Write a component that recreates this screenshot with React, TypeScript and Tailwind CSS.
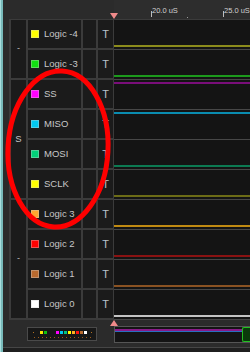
type Channel = { name: string; swatch: string; line: string; high?: boolean };

const channels: Channel[] = [
  { name: 'Logic -4', swatch: '#ffff00', line: '#8c8c1c' },
  { name: 'Logic -3', swatch: '#11e011', line: '#1c9a1c' },
  { name: 'SS', swatch: '#ff00ff', line: '#7a0e7a', high: true },
  { name: 'MISO', swatch: '#00c8f0', line: '#0a8cb0', high: true },
  { name: 'MOSI', swatch: '#00d27a', line: '#0c7a52' },
  { name: 'SCLK', swatch: '#ffff00', line: '#6c6c16' },
  { name: 'Logic 3', swatch: '#ffa530', line: '#c08a12' },
  { name: 'Logic 2', swatch: '#ff0000', line: '#8a1212' },
  { name: 'Logic 1', swatch: '#b8692e', line: '#8a5222' },
  { name: 'Logic 0', swatch: '#ffffff', line: '#c4c4c4' },
];

// small colour strip in the bottom-left mini overview
const legend = ['#ffe600', '#11c011', '', '', '#ff00ff', '#00c8f0', '#00c080', '#ffff00', '#ffb020', '#ff1010', '#b8692e', '#ffffff'];

function DownMarker() {
  return <div className="h-0 w-0 border-x-[4px] border-t-[6px] border-x-transparent border-t-[#f08a8a]" />;
}

function UpMarker() {
  return <div className="h-0 w-0 border-x-[4px] border-b-[6px] border-x-transparent border-b-[#f08a8a]" />;
}

export default function App() {
  return (
    <div className="relative flex h-[352px] w-[250px] overflow-hidden bg-[#2b2b2b] font-['Liberation_Sans',Arial,sans-serif]">
      {/* window edge */}
      <div className="w-px bg-[#a8dede]" />
      <div className="w-[2px] bg-[#78baba]" />

      <div className="flex flex-1 flex-col">
        {/* time axis header */}
        <div className="relative h-[19px] shrink-0">
          <div className="absolute right-0 top-0 h-[19px] w-[136px] bg-[#2d2d2d]">
            <div className="absolute left-[37px] top-[11px] h-[6px] w-px bg-[#bdbdbd]" />
            <span className="absolute left-[38px] top-[7px] text-[7.5px] leading-none text-[#cfcfcf]">20.0 uS</span>
            <div className="absolute left-[73px] top-[17px] h-px w-px bg-[#9a9a9a]" />
            <div className="absolute left-[109px] top-[11px] h-[6px] w-px bg-[#bdbdbd]" />
            <span className="absolute left-[110px] top-[7px] text-[7.5px] leading-none text-[#cfcfcf]">25.0 uS</span>
          </div>
          <div className="absolute left-[107px] top-[13px]">
            <DownMarker />
          </div>
        </div>

        {/* channel table + waveforms */}
        <div className="flex h-[301px] shrink-0">
          <div className="ml-[6px] grid grid-cols-[15px_53px_13px_15px] grid-rows-[repeat(10,28px)] gap-[2px] bg-[#3b3b3b] pb-[2px] pl-[2px] pr-px pt-px">
            <div className="row-span-2 flex items-center justify-center bg-[#1b1b1b] text-[9px] text-[#bdbdbd]">-</div>
            {channels.slice(0, 2).map((c) => <Cells key={c.name} c={c} />)}
            <div className="row-span-4 flex items-center justify-center bg-[#1b1b1b] text-[9.5px] text-[#c4c4c4]">S</div>
            {channels.slice(2, 6).map((c) => <Cells key={c.name} c={c} />)}
            <div className="row-span-4 flex items-center justify-center bg-[#1b1b1b] text-[9px] text-[#bdbdbd]">-</div>
            {channels.slice(6).map((c) => <Cells key={c.name} c={c} />)}
          </div>

          <div className="flex flex-1 flex-col bg-[#141414]">
            <div className="h-px bg-[#3b3b3b]" />
            {channels.map((c) => (
              <div key={c.name} className="flex h-[30px] flex-col">
                {c.high && <div className="mt-[2px] h-[2px]" style={{ backgroundColor: c.line }} />}
                {!c.high && <div className="mt-auto h-[2px]" style={{ backgroundColor: c.line }} />}
                <div className={c.high ? 'mt-auto h-px bg-[#474747]' : 'mt-[2px] h-px bg-[#474747]'} />
              </div>
            ))}
          </div>
        </div>

        {/* bottom overview bar */}
        <div className="relative flex h-[27px] shrink-0">
          <div className="ml-[24px] mt-[7px] flex h-[14px] w-[70px] flex-col items-center justify-center gap-[3px] border border-[#4a4a4a] bg-[#171717]">
            <div className="flex items-center gap-px">
              <div className="mr-[5px] h-px w-px bg-[#b07020]" />
              {legend.map((col, i) => (
                <div key={i} className="h-[3px] w-[3px]" style={{ backgroundColor: col || 'transparent' }} />
              ))}
              <div className="ml-[3px] h-px w-px bg-[#b07020]" />
            </div>
            <div className="flex gap-[3px]">
              {Array.from({ length: 15 }).map((_, i) => (
                <div key={i} className="h-px w-px bg-[#9a5a1c]" />
              ))}
            </div>
          </div>
          <div className="ml-[17px] mt-[6px] flex h-[17px] flex-1 border border-r-0 border-[#555555] bg-[#141414]">
            <div className="flex flex-1 flex-col pt-[2px]">
              <div className="h-[2px] bg-[#8a1a8a]" />
              <div className="h-px bg-[#2a6ec0]" />
            </div>
            <div className="w-[8px] rounded-l-[2px] border border-r-0 border-[#22c022] bg-[#0b3a0b]" />
          </div>
          <div className="absolute left-[107px] top-0">
            <UpMarker />
          </div>
        </div>
        <div className="h-px bg-[#464646]" />
        <div className="flex-1 bg-[#1f1f1f]" />
      </div>

      {/* annotation ring */}
      <svg className="pointer-events-none absolute inset-0" width="250" height="352" viewBox="0 0 250 352">
        <ellipse cx="58" cy="149" rx="50" ry="78" fill="none" stroke="#ff0000" strokeWidth="5" transform="rotate(3 58 149)" />
      </svg>
    </div>
  );
}

function Cells({ c }: { c: Channel }) {
  return (
    <>
      <div className="flex items-center bg-[#1b1b1b] pl-[3px]">
        <div className="h-[8px] w-[8px] shrink-0 border border-[#d0d0d0]/40" style={{ backgroundColor: c.swatch }} />
        <span className="ml-[5px] whitespace-nowrap text-[9.5px] text-[#c8c8c8]">{c.name}</span>
      </div>
      <div className="bg-[#1b1b1b]" />
      <div className="flex items-center justify-center bg-[#1b1b1b] text-[11px] text-[#b8c2cc]">T</div>
    </>
  );
}
